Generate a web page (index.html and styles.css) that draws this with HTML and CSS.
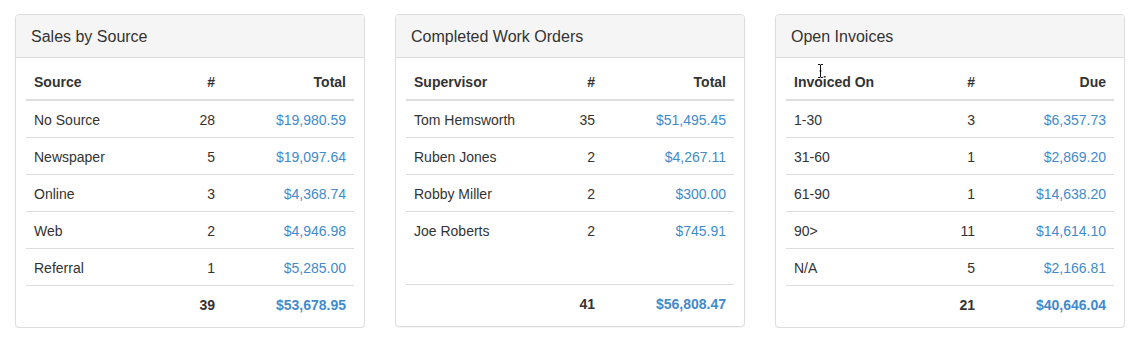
FILE: index.html
```html
<!DOCTYPE html>
<html>
<head>
<meta charset="utf-8">
<link rel="stylesheet" href="styles.css">
</head>
<body>
<div class="row">
  <div class="col">
    <div class="panel">
      <div class="panel-heading">Sales by Source</div>
      <div class="panel-body">
        <table class="tbl">
          <thead>
            <tr><th class="c-name">Source</th><th class="c-num">#</th><th class="c-amt">Total</th></tr>
          </thead>
          <tbody>
            <tr><td>No Source</td><td class="num">28</td><td class="num"><a>$19,980.59</a></td></tr>
            <tr><td>Newspaper</td><td class="num">5</td><td class="num"><a>$19,097.64</a></td></tr>
            <tr><td>Online</td><td class="num">3</td><td class="num"><a>$4,368.74</a></td></tr>
            <tr><td>Web</td><td class="num">2</td><td class="num"><a>$4,946.98</a></td></tr>
            <tr><td>Referral</td><td class="num">1</td><td class="num"><a>$5,285.00</a></td></tr>
            <tr class="total"><td></td><td class="num">39</td><td class="num"><a>$53,678.95</a></td></tr>
          </tbody>
        </table>
      </div>
    </div>
  </div>
  <div class="col">
    <div class="panel">
      <div class="panel-heading">Completed Work Orders</div>
      <div class="panel-body">
        <table class="tbl">
          <thead>
            <tr><th class="c-name">Supervisor</th><th class="c-num">#</th><th class="c-amt">Total</th></tr>
          </thead>
          <tbody>
            <tr><td>Tom Hemsworth</td><td class="num">35</td><td class="num"><a>$51,495.45</a></td></tr>
            <tr><td>Ruben Jones</td><td class="num">2</td><td class="num"><a>$4,267.11</a></td></tr>
            <tr><td>Robby Miller</td><td class="num">2</td><td class="num"><a>$300.00</a></td></tr>
            <tr><td>Joe Roberts</td><td class="num">2</td><td class="num"><a>$745.91</a></td></tr>
            <tr class="spacer"><td>&nbsp;</td><td></td><td></td></tr>
            <tr class="total"><td></td><td class="num">41</td><td class="num"><a>$56,808.47</a></td></tr>
          </tbody>
        </table>
      </div>
    </div>
  </div>
  <div class="col">
    <div class="panel">
      <div class="panel-heading">Open Invoices</div>
      <div class="panel-body">
        <table class="tbl">
          <thead>
            <tr><th class="c-name">Invoiced On</th><th class="c-num">#</th><th class="c-amt">Due</th></tr>
          </thead>
          <tbody>
            <tr><td>1-30</td><td class="num">3</td><td class="num"><a>$6,357.73</a></td></tr>
            <tr><td>31-60</td><td class="num">1</td><td class="num"><a>$2,869.20</a></td></tr>
            <tr><td>61-90</td><td class="num">1</td><td class="num"><a>$14,638.20</a></td></tr>
            <tr><td>90&gt;</td><td class="num">11</td><td class="num"><a>$14,614.10</a></td></tr>
            <tr><td>N/A</td><td class="num">5</td><td class="num"><a>$2,166.81</a></td></tr>
            <tr class="total"><td></td><td class="num">21</td><td class="num"><a>$40,646.04</a></td></tr>
          </tbody>
        </table>
      </div>
      <svg class="cursor" width="7" height="14" viewBox="0 0 7 14"><path d="M1 0.5h2l0.5 0.5l0.5-0.5h2M3.5 1v12M1 13.5h2l0.5-0.5l0.5 0.5h2M2.5 7h2" stroke="#111" stroke-width="1" fill="none"/></svg>
    </div>
  </div>
</div>
</body>
</html>
```
FILE: styles.css
```css
* { box-sizing: border-box; }
body {
  margin: 0;
  font-family: "Liberation Sans", Arial, Helvetica, sans-serif;
  font-size: 14px;
  line-height: 20px;
  color: #333;
  background: #fff;
}
.row {
  display: flex;
  padding-top: 14px;
}
.col {
  width: 380px;
  padding: 0 15px;
}
.panel {
  position: relative;
  border: 1px solid #ddd;
  border-radius: 4px;
  background: #fff;
  box-shadow: 0 1px 1px rgba(0,0,0,0.05);
}
.panel-heading {
  background: #f5f5f5;
  border-bottom: 1px solid #ddd;
  border-radius: 3px 3px 0 0;
  padding: 11px 15px 9px;
  font-size: 16px;
  line-height: 22px;
  color: #333;
}
.panel-body {
  padding: 5px 10px;
}
.tbl {
  width: 100%;
  border-collapse: collapse;
  border-spacing: 0;
  table-layout: fixed;
}
.tbl th, .tbl td {
  padding: 9px 8px 7px;
  line-height: 20px;
  text-align: left;
  vertical-align: top;
}
.tbl th {
  font-weight: bold;
  vertical-align: bottom;
  border-bottom: 2px solid #ddd;
}
.tbl td {
  border-top: 1px solid #ddd;
}
.tbl .c-num { width: 60px; text-align: right; }
.tbl .c-amt { width: 131px; text-align: right; }
.tbl .num { text-align: right; }
.tbl a { color: #428bca; text-decoration: none; }
.tbl .total td { font-weight: bold; }
.tbl .spacer td { border-top: none; }
.cursor {
  position: absolute;
  left: 41px;
  top: 49px;
}
```
